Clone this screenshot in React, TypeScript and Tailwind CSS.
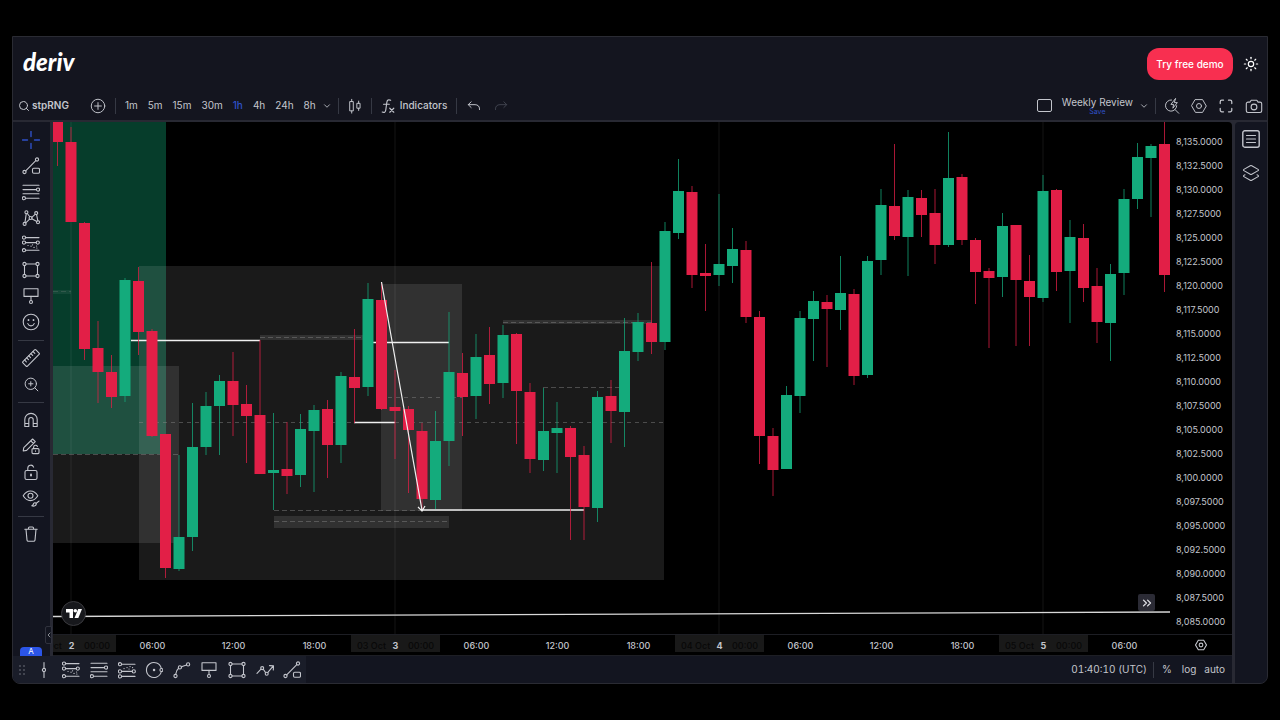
import React from 'react';
import { ChevronDown, ChevronLeft, ChevronsRight, Layers2, Search, Sun, ZoomIn } from 'lucide-react';

type Candle = [dir: 'u' | 'd', high: number, top: number, bottom: number, low: number];

const FIRST_X = 57.5;
const STEP = 13.5;

const candles: Candle[] = [
  ['d', 122, 122, 142, 166], ['d', 127, 142, 222, 222], ['d', 222, 223, 349, 360], ['d', 321, 348, 372, 403],
  ['d', 355, 372, 397, 408], ['u', 278, 280, 396, 402], ['d', 267, 281, 332, 355], ['d', 329, 331, 436, 437],
  ['d', 434, 434, 568, 578], ['u', 455, 537, 569, 571], ['u', 403, 447, 537, 551], ['u', 392, 406, 447, 455],
  ['u', 375, 381, 406, 455], ['d', 352, 381, 405, 436], ['d', 385, 404, 416, 463], ['d', 340, 415, 474, 474],
  ['u', 413, 470, 473, 510], ['d', 422, 469, 476, 494], ['u', 414, 429, 475, 487], ['u', 405, 410, 431, 492],
  ['d', 400, 409, 445, 478], ['u', 372, 376, 445, 463], ['d', 329, 377, 388, 423], ['u', 283, 299, 387, 396],
  ['d', 282, 300, 409, 410], ['d', 370, 407, 411, 459], ['d', 406, 409, 430, 493], ['d', 423, 431, 499, 510],
  ['u', 411, 441, 500, 509], ['u', 312, 372, 441, 466], ['d', 353, 373, 397, 436], ['u', 334, 357, 396, 419],
  ['d', 327, 355, 384, 404], ['u', 325, 335, 383, 398], ['d', 333, 334, 391, 444], ['d', 383, 392, 459, 473],
  ['u', 388, 431, 460, 471], ['u', 402, 428, 433, 473], ['d', 426, 428, 457, 540], ['d', 446, 455, 507, 540],
  ['u', 391, 397, 508, 522], ['d', 380, 396, 411, 443], ['u', 318, 351, 412, 447], ['u', 313, 322, 352, 361],
  ['d', 262, 323, 342, 354], ['u', 222, 231, 342, 350], ['u', 159, 191, 233, 239], ['d', 186, 192, 275, 288],
  ['d', 244, 273, 276, 311], ['u', 194, 264, 275, 286], ['u', 228, 249, 266, 283], ['d', 241, 250, 317, 323],
  ['d', 311, 317, 436, 464], ['d', 428, 436, 470, 496], ['u', 386, 395, 469, 469], ['u', 311, 318, 396, 413],
  ['u', 291, 301, 319, 361], ['d', 295, 302, 309, 367], ['u', 256, 293, 310, 330], ['d', 289, 294, 376, 385],
  ['u', 256, 261, 375, 378], ['u', 189, 205, 260, 275], ['d', 144, 206, 236, 240], ['u', 190, 197, 237, 276],
  ['d', 190, 198, 215, 237], ['d', 189, 213, 245, 264], ['u', 132, 178, 245, 247], ['d', 174, 177, 240, 245],
  ['d', 238, 240, 272, 304], ['d', 268, 271, 278, 348], ['u', 213, 226, 277, 297], ['d', 225, 225, 280, 346],
  ['d', 255, 281, 297, 346], ['u', 175, 191, 298, 302], ['d', 189, 190, 272, 291], ['u', 220, 237, 271, 323],
  ['d', 224, 238, 288, 302], ['d', 268, 286, 322, 343], ['u', 264, 274, 323, 361], ['u', 189, 199, 273, 295],
  ['u', 143, 157, 199, 209], ['u', 144, 146, 158, 217], ['d', 122, 144, 275, 292],
];

const timeframes = ['1m', '5m', '15m', '30m', '1h', '4h', '24h', '8h'];
const timeLabels = ['2', '06:00', '12:00', '18:00', '3', '06:00', '12:00', '18:00', '4', '06:00', '12:00', '18:00', '5', '06:00'];
const prices = Array.from({ length: 21 }, (_, i) =>
  (8135 - i * 2.5).toLocaleString('en-US', { minimumFractionDigits: 4 })
);

/* ---------- icons, all on an 18px grid ---------- */

const Icon: React.FC<{ children: React.ReactNode; className?: string }> = ({ children, className = 'size-[18px]' }) => (
  <svg
    viewBox="0 0 18 18"
    className={className}
    fill="none"
    stroke="currentColor"
    strokeWidth="1.1"
    strokeLinecap="round"
    strokeLinejoin="round"
    aria-hidden="true"
  >
    {children}
  </svg>
);

const icons = {
  cross: <Icon><path d="M9 .5v5M9 12.5v5M.5 9h5M12.5 9h5" strokeWidth="1.4" /></Icon>,
  trend: (
    <Icon>
      <path d="M3.7 13.8 13.8 3.7" />
      <circle cx="2.5" cy="15" r="1.6" />
      <circle cx="15" cy="2.5" r="1.6" />
      <rect x="10.5" y="11.2" width="7" height="5" rx="1.2" />
    </Icon>
  ),
  fib: (
    <Icon>
      <path d="M1 2.3h16M1 6.6h13.2M1 10.8h16M3.5 15.2H17" />
      <circle cx="16" cy="6.6" r="1.6" />
      <circle cx="1.9" cy="15.2" r="1.6" />
    </Icon>
  ),
  pattern: (
    <Icon>
      <path d="M3 13.3 4.2 4.8M5.3 4.5l2.3 3M9.8 8.3l3.3-3M14.6 5.6l1.2 6M9.8 9.8l5 2.8M7.6 10.2l-3.8 3.6" />
      <circle cx="4.4" cy="3.2" r="1.5" />
      <circle cx="14.2" cy="4.1" r="1.5" />
      <circle cx="2.6" cy="14.9" r="1.5" />
      <circle cx="16" cy="13.2" r="1.5" />
      <circle cx="8.6" cy="9" r="1.5" />
    </Icon>
  ),
  forecast: (
    <Icon>
      <path d="M3.6 2.6H17M3.6 7.6h10.6M3.6 15.2H17" />
      <path d="M6 10.5h.1M9 11.2h.1M12 12.4h.1M10.5 9.8h.1M14.5 11h.1M14.8 13h.1" strokeWidth="1.2" />
      <circle cx="2" cy="2.6" r="1.6" />
      <circle cx="2" cy="7.6" r="1.6" />
      <circle cx="15.8" cy="7.6" r="1.6" />
      <circle cx="2" cy="15.2" r="1.6" />
    </Icon>
  ),
  channel: (
    <Icon>
      <path d="M3.6 3.2H17M3.6 10.4h10.6M3.6 15.4H17" />
      <path d="M6 7.6h.1M9 6.6h.1M12 5.6h.1M11 8h.1M14.5 6.6h.1" strokeWidth="1.2" />
      <circle cx="2" cy="3.2" r="1.6" />
      <circle cx="2" cy="10.4" r="1.6" />
      <circle cx="15.8" cy="10.4" r="1.6" />
      <circle cx="2" cy="15.4" r="1.6" />
    </Icon>
  ),
  rect: (
    <Icon>
      <path d="M4 3h10M4 15h10M2.5 4.6v8.8M15.5 4.6v8.8" />
      <circle cx="2.5" cy="3" r="1.6" />
      <circle cx="15.5" cy="3" r="1.6" />
      <circle cx="2.5" cy="15" r="1.6" />
      <circle cx="15.5" cy="15" r="1.6" />
    </Icon>
  ),
  callout: (
    <Icon>
      <rect x="2" y="1.8" width="14" height="7.6" />
      <path d="M9 9.4v4" />
      <circle cx="9" cy="15" r="1.5" />
    </Icon>
  ),
  smile: (
    <Icon>
      <circle cx="9" cy="9" r="7.8" />
      <path d="M5.8 10.6c.7 1.6 1.9 2.3 3.2 2.3s2.5-.7 3.2-2.3" />
      <path d="M6.5 6.8v.4M11.5 6.8v.4" strokeWidth="1.7" />
    </Icon>
  ),
  ruler: (
    <Icon>
      <g transform="rotate(-45 9 9)">
        <rect x="-.2" y="5.8" width="18.4" height="6.4" rx="1" />
        <path d="M3 5.8v2.6M6 5.8v2.6M9 5.8v2.6M12 5.8v2.6M15 5.8v2.6" />
      </g>
    </Icon>
  ),
  magnet: (
    <Icon>
      <path d="M2.8 15.5V8.6a6.2 6.2 0 0 1 12.4 0v6.9h-4V8.7a2.2 2.2 0 0 0-4.4 0v6.8zM2.8 12.5h4M11.2 12.5h4" />
    </Icon>
  ),
  pencilLock: (
    <Icon>
      <path d="M1.2 14l.6-3.3L10.6 2l2.7 2.7-8.7 8.7zM8.8 3.8l2.7 2.7" />
      <rect x="10" y="11.6" width="7" height="5" rx="1" />
      <path d="M11.6 11.6v-1.4a2 2 0 0 1 3.8-.8M13.5 13.8v.5" />
    </Icon>
  ),
  lock: (
    <Icon>
      <rect x="3" y="7.5" width="12" height="9" rx="1.6" />
      <path d="M5.8 7.5V5a3 3 0 0 1 5.8-.9" />
      <path d="M9 11.5v1" strokeWidth="2" />
    </Icon>
  ),
  eye: (
    <Icon>
      <path d="M1.2 6.8c2-3.3 4.5-4.8 7.3-4.8s5.3 1.5 7.3 4.8c-2 3.3-4.5 4.8-7.3 4.8s-5.3-1.5-7.3-4.8z" />
      <circle cx="8.5" cy="6.8" r="2.5" />
      <path d="M9.8 16.8c1.2.5 4.2.5 4.5-1.6.2-1.3-1.7-1.9-2.6-.8-.6.8-.2 1.8-1.9 2.4zM14.3 14.3l2.7-2.2" />
    </Icon>
  ),
  trash: (
    <Icon>
      <path d="M2.8 4.3h12.4M6.5 4.3V3a1 1 0 0 1 1-1h3a1 1 0 0 1 1 1v1.3M4 4.3l1 10.8a1.4 1.4 0 0 0 1.4 1.2h5.2a1.4 1.4 0 0 0 1.4-1.2l1-10.8" />
    </Icon>
  ),
  vline: (
    <Icon>
      <path d="M9 1.5v5.8M9 10.7v5.8" />
      <circle cx="9" cy="9" r="1.6" />
    </Icon>
  ),
  circle: (
    <Icon>
      <path d="M16.3 7.5A7.5 7.5 0 1 0 16.3 10.5" />
      <circle cx="16.4" cy="9" r="1.5" />
      <path d="M9 9h.1" strokeWidth="2.4" />
    </Icon>
  ),
  curve: (
    <Icon>
      <path d="M2.7 13.4C3 10.5 4 8.6 5.6 7.3M8.3 5.9c1.7-.8 3.5-1.3 5.2-1.9" />
      <circle cx="2.5" cy="15" r="1.6" />
      <circle cx="6.9" cy="6.4" r="1.6" />
      <circle cx="15.1" cy="3.4" r="1.6" />
    </Icon>
  ),
  arrowPath: (
    <Icon>
      <path d="M1 12.4 5 8.2M7.3 8.3l2.3 3.3M11.9 11.4l5.4-6.5M13.5 4.6l4 .3-.2 4" />
      <circle cx="6.2" cy="7.1" r="1.5" />
      <circle cx="10.7" cy="12.7" r="1.5" />
    </Icon>
  ),
  plus: (
    <Icon className="size-4">
      <circle cx="9" cy="9" r="7.6" />
      <path d="M9 5.2v7.6M5.2 9h7.6" />
    </Icon>
  ),
  candles: (
    <Icon className="size-4">
      <path d="M3.5 4h3.6v10.5H3.5zM5.3 4V1.5M5.3 14.5V17M11.5 6h3.2v5.5h-3.2zM13.1 6V3.5M13.1 11.5V14" />
    </Icon>
  ),
  fx: (
    <Icon className="size-4">
      <path d="M12 2.6c-2.5-1.4-4 0-4.3 2.2L6.5 13.5c-.3 2.4-1.7 3.4-4 2.3M4 7h6.5M11 11.5l4.5 4.5M15.5 11.5 11 16" strokeWidth="1.3" />
    </Icon>
  ),
  undo: <Icon className="size-4"><path d="M5.8 4.3 2.5 7.5l3.3 3.2M2.5 7.5h7.7c3 0 5 1.8 5 4.8v.7" /></Icon>,
  redo: <Icon className="size-4"><path d="m12.2 4.3 3.3 3.2-3.3 3.2M15.5 7.5H7.8c-3 0-5 1.8-5 4.8v.7" /></Icon>,
  quick: (
    <Icon className="size-4">
      <path d="M8.5 2.2A6.3 6.3 0 1 0 14.3 8.7M12.4 13l4.2 4.2M12.8.8 7.8 7.2h3l-.8 4.3 5-6.3h-3z" />
    </Icon>
  ),
  gear: (
    <Icon className="size-4">
      <path d="M5 1.8h8L17.2 9 13 16.2H5L.8 9z" />
      <circle cx="9" cy="9" r="2.8" />
    </Icon>
  ),
  full: (
    <Icon className="size-4">
      <path d="M2.5 6.2V4.3a1.8 1.8 0 0 1 1.8-1.8h1.9M11.8 2.5h1.9a1.8 1.8 0 0 1 1.8 1.8v1.9M15.5 11.8v1.9a1.8 1.8 0 0 1-1.8 1.8h-1.9M6.2 15.5H4.3a1.8 1.8 0 0 1-1.8-1.8v-1.9" strokeWidth="1.4" />
    </Icon>
  ),
  camera: (
    <Icon>
      <path d="M6.2 3.2h5.6l1.3 1.9H15a1.7 1.7 0 0 1 1.7 1.7v7A1.7 1.7 0 0 1 15 15.5H3a1.7 1.7 0 0 1-1.7-1.7v-7A1.7 1.7 0 0 1 3 5.1h1.9z" />
      <circle cx="9" cy="10" r="2.9" />
    </Icon>
  ),
  list: (
    <Icon>
      <rect x=".8" y=".8" width="16.4" height="16.4" rx="2" strokeWidth="1.4" />
      <path d="M4.5 5.5h9M4.5 9h9M4.5 12.5h9" />
    </Icon>
  ),
};

type IconName = keyof typeof icons;

const leftTools: [IconName | 'sep' | 'zoom', string][] = [
  ['cross', 'Cross'], ['trend', 'Trend line'], ['fib', 'Fib retracement'], ['pattern', 'XABCD pattern'],
  ['forecast', 'Forecast'], ['rect', 'Rectangle'], ['callout', 'Callout'], ['smile', 'Emoji'], ['sep', 's1'],
  ['ruler', 'Measure'], ['zoom', 'Zoom in'], ['sep', 's2'], ['magnet', 'Magnet'], ['pencilLock', 'Stay in drawing mode'],
  ['lock', 'Lock drawings'], ['eye', 'Hide drawings'], ['sep', 's3'], ['trash', 'Remove'],
];

const bottomTools: [IconName, string][] = [
  ['vline', 'Vertical line'], ['forecast', 'Long position'], ['fib', 'Fib levels'], ['channel', 'Short position'],
  ['circle', 'Circle'], ['curve', 'Curve'], ['callout', 'Callout'], ['rect', 'Rectangle'], ['arrowPath', 'Path'], ['trend', 'Trend line'],
];

const Divider = () => <div className="h-4 w-px bg-[#363944]" />;

const Header = () => (
  <header className="flex h-[54px] shrink-0 items-center justify-between pr-2 pl-2.5">
    <a href="#" className="pb-1 font-['Lato'] text-2xl leading-7 font-black text-white italic">deriv</a>
    <div className="flex items-center gap-2.5">
      <button className="h-8 w-[86px] rounded-xl bg-[#f82f50] text-[10px] font-medium text-white">Try free demo</button>
      <button aria-label="Theme" className="text-white"><Sun size={16} strokeWidth={1.8} /></button>
    </div>
  </header>
);

const Toolbar = () => (
  <div className="flex h-[29px] shrink-0 items-center justify-between pr-1 pl-[5px] text-[10px]">
    <div className="flex items-center">
      <button className="flex items-center gap-0.5 font-semibold">
        <Search size={12} strokeWidth={2} />
        stpRNG
      </button>
      <button aria-label="Compare" className="mr-[9px] ml-[21px]">{icons.plus}</button>
      <Divider />
      <div className="flex gap-2.5 pl-[9px]">
        {timeframes.map((t) => (
          <button key={t} className={t === '1h' ? 'font-medium text-[#2f50c8]' : ''}>{t}</button>
        ))}
      </div>
      <button aria-label="More intervals" className="mx-1.5"><ChevronDown size={10} /></button>
      <Divider />
      <button aria-label="Chart type" className="mx-2">{icons.candles}</button>
      <Divider />
      <button className="mr-[9px] ml-2 flex items-center gap-1 font-medium">{icons.fx} Indicators</button>
      <Divider />
      <button aria-label="Undo" className="ml-[9px]">{icons.undo}</button>
      <button aria-label="Redo" className="ml-[11px] text-[#41444f]">{icons.redo}</button>
    </div>
    <div className="flex items-center">
      <button aria-label="Layout" className="mr-2.5 h-[13px] w-[15px] rounded-xs border border-current" />
      <button className="flex flex-col items-center">
        <span className="text-[10px] leading-3">Weekly Review</span>
        <span className="text-[7px] leading-[7px] text-[#2f50c8]">Save</span>
      </button>
      <button aria-label="Layouts" className="mx-1.5"><ChevronDown size={10} /></button>
      <Divider />
      <div className="flex items-center gap-[11px] pl-2">
        <button aria-label="Quick search">{icons.quick}</button>
        <button aria-label="Settings">{icons.gear}</button>
        <button aria-label="Fullscreen">{icons.full}</button>
        <button aria-label="Snapshot">{icons.camera}</button>
      </div>
    </div>
  </div>
);

const LeftBar = () => (
  <nav className="flex w-[37px] shrink-0 flex-col items-center bg-[#131520] pt-[5px] pr-px">
    {leftTools.map(([name, label]) =>
      name === 'sep' ? (
        <div key={label} className="mt-[5px] mb-1 h-px w-[26px] bg-[#363944]" />
      ) : (
        <button key={label} aria-label={label} className={`flex h-[26px] w-full items-center justify-center ${name === 'cross' ? 'text-[#2f50c8]' : ''}`}>
          {name === 'zoom' ? <ZoomIn size={17} strokeWidth={1.4} /> : icons[name]}
        </button>
      )
    )}
    <button className="mt-auto h-[9px] w-[22px] rounded-t-sm bg-[#2b55e8] text-[8px] leading-[9px] text-white">A</button>
  </nav>
);

const CandleChart = () => (
  <svg viewBox="53 122 1117 512" preserveAspectRatio="none" className="absolute inset-0 h-full w-full">
    {/* zones */}
    <rect x="53" y="122" width="113" height="332" fill="#063d2b" />
    <g fill="#fff" fillOpacity="0.1">
      <rect x="53" y="366" width="126" height="177" />
      <rect x="139" y="266" width="525" height="314" />
      <rect x="381" y="284" width="81" height="227" />
      <rect x="274" y="516" width="175" height="12" />
      <rect x="260" y="335" width="103" height="5" />
      <rect x="503" y="320" width="149" height="4" />
    </g>
    <rect x="53" y="290" width="18" height="4" fill="#fff" fillOpacity="0.06" />
    <path d="M71 122V634M395 122V634M719 122V634M1043 122V634" stroke="#fff" strokeOpacity="0.08" />
    <g stroke="#8a8a8a" strokeOpacity="0.45">
      <path d="M139 422.5H664M388 397.5H462" strokeDasharray="4 4" />
      <path d="M53 454.5H179M274 510.5H422M274 521.5H449M543 387.5H620M503 322.5H652M260 337.5H363" strokeDasharray="5 3" />
      <path d="M53 291.5H71" strokeDasharray="5 3" strokeOpacity="0.25" />
    </g>
    <path d="M53 616.5 1170 612" stroke="#d8d8d8" strokeWidth="1.3" />
    <path d="M131 340.5H260M373 342.5H449M354 422.5H395M422 510H584" stroke="#f0f0f0" strokeWidth="1.3" />

    {candles.map(([dir, high, top, bottom, low], i) => {
      const x = FIRST_X + i * STEP;
      const color = dir === 'u' ? '#14ab7c' : '#e21f47';
      return (
        <g key={i} fill={color}>
          <rect x={x - 0.5} y={high} width="1" height={low - high} fillOpacity="0.75" />
          <rect x={x - 5.5} y={top} width="11" height={bottom - top} />
        </g>
      );
    })}

    <path d="M381.5 282 422 510M418 507l4 4 3-5" fill="none" stroke="#f0f0f0" strokeWidth="1.2" />
  </svg>
);

const TimeAxis = () => (
  <div className="flex h-[22px] shrink-0 border-y border-[#1d1e24] bg-black text-[9px] font-medium">
    <div className="flex flex-1 overflow-hidden">
      <div className="mr-[5px] -ml-[22px] flex flex-1">
        {timeLabels.map((label, i) => (
          <div key={i} className="flex w-0 flex-1 items-start justify-center">
            {label.length === 1 ? (
              <div className="grid h-[17px] w-[89px] shrink-0 grid-cols-[1fr_auto_1fr] bg-[#191919] px-1.5 pt-px leading-5 text-[#080808]">
                <span>0{label} Oct</span>
                <span className="font-bold text-[#c3c5cc]">{label}</span>
                <span className="text-right">00:00</span>
              </div>
            ) : (
              <span className="pt-px leading-5">{label}</span>
            )}
          </div>
        ))}
      </div>
    </div>
    <button aria-label="Axis settings" className="flex w-[62px] shrink-0 items-center justify-center">
      <svg viewBox="0 0 18 18" className="size-3" fill="none" stroke="currentColor" strokeWidth="1.6" aria-hidden="true">
        <path d="M5 1.8h8L17.2 9 13 16.2H5L.8 9z" />
        <circle cx="9" cy="9" r="2.8" />
      </svg>
    </button>
  </div>
);

const ChartPane = () => (
  <main className="flex min-w-0 flex-1 flex-col overflow-hidden rounded-tr bg-black">
    <div className="flex flex-1">
      <div className="relative flex-1">
        <CandleChart />
        <a href="#" aria-label="TradingView" className="absolute bottom-2 left-2 flex size-[25px] items-center justify-center rounded-full border border-[#3a3a3e] bg-[#17181c] text-white">
          <svg viewBox="0 0 16 9" className="w-4" fill="currentColor" aria-hidden="true">
            <path d="M0 0h7v9H3.5V3.6H0z" />
            <circle cx="9.3" cy="1.8" r="1.8" />
            <path d="M12.2 0H16l-3.7 9H8.5z" />
          </svg>
        </a>
        <button aria-label="Scroll to latest" className="absolute right-[15px] bottom-[23px] flex size-[17px] items-center justify-center rounded-xs bg-[#2b2b35] text-[#e0e0e6]">
          <ChevronsRight size={14} strokeWidth={2.2} />
        </button>
      </div>
      <div className="flex w-[62px] shrink-0 flex-col pt-2 pl-1.5 text-[9px]">
        {prices.map((p) => (
          <div key={p} className="flex flex-1 items-center leading-3">{p}</div>
        ))}
      </div>
    </div>
    <TimeAxis />
  </main>
);

const BottomBar = () => (
  <footer className="flex h-[27px] shrink-0 items-center justify-between bg-[#131520] text-[10px]">
    <div className="flex h-full w-[293px] items-center bg-[#1a1d29]">
      <div className="flex w-[17px] shrink-0 justify-center gap-0.5">
        {[0, 1].map((col) => (
          <div key={col} className="flex flex-col gap-0.5">
            {[0, 1, 2].map((row) => (
              <span key={row} className="size-0.5 rounded-full bg-[#50535e]" />
            ))}
          </div>
        ))}
      </div>
      {bottomTools.map(([name, label], i) => (
        <button key={i} aria-label={label} className="flex flex-1 justify-center">{icons[name]}</button>
      ))}
    </div>
    <div className="flex items-center pr-[7px]">
      <button className="mr-1.5 tabular-nums">01:40:10 (UTC)</button>
      <Divider />
      <button className="mr-2.5 ml-2">%</button>
      <button className="mr-2">log</button>
      <button>auto</button>
    </div>
  </footer>
);

const App: React.FC = () => {
  return (
    <div className="flex min-h-screen flex-col bg-black px-3 py-9 font-['Inter',sans-serif] text-[#c3c5cc]">
      <div className="flex flex-1 flex-col overflow-hidden rounded-b-lg border border-[#2a2b33] bg-[#14151f]">
        <Header />
        <Toolbar />
        <div className="flex flex-1 gap-[3px] bg-[#282933] pt-0.5">
          <div className="flex min-w-0 flex-1 flex-col">
            <div className="relative flex flex-1 gap-[3px]">
              <LeftBar />
              <ChartPane />
              <button aria-label="Collapse" className="absolute bottom-3 left-8 flex h-[18px] w-[7px] items-center justify-center rounded-l-xs border border-[#30323d] bg-[#131520]">
                <ChevronLeft size={8} className="shrink-0" />
              </button>
            </div>
            <BottomBar />
          </div>
          <aside className="flex w-8 shrink-0 flex-col items-center gap-4 rounded-tl bg-[#131520] pt-2">
            <button aria-label="Watchlist">{icons.list}</button>
            <button aria-label="Object tree"><Layers2 size={18} strokeWidth={1.4} /></button>
          </aside>
        </div>
      </div>
    </div>
  );
};

export default App;
